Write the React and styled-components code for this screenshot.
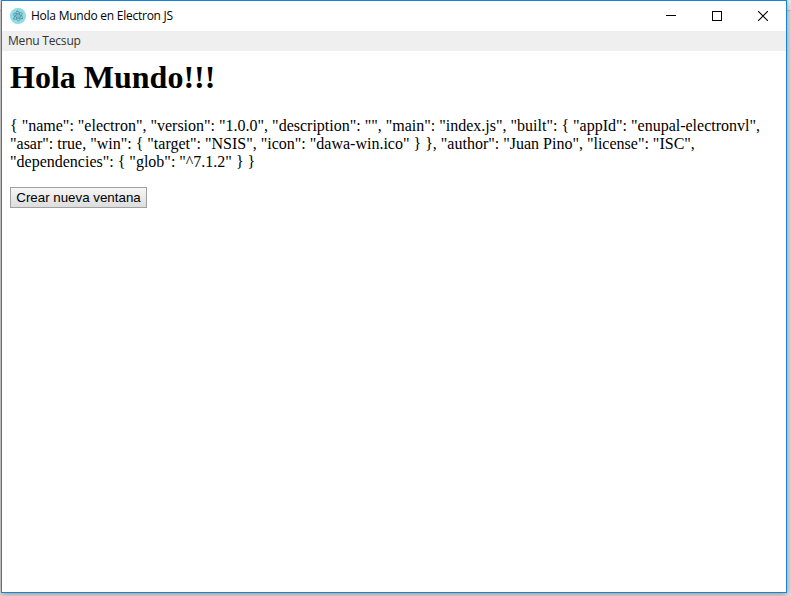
import React from "react";
import styled, { createGlobalStyle } from "styled-components";

const GlobalStyle = createGlobalStyle`
  * { box-sizing: border-box; }
  html, body { margin: 0; overflow: hidden; background: #d0d0d0; }
`;

const Desktop = styled.div`
  width: 791px;
  height: 596px;
  padding-left: 1px;
  background: linear-gradient(to bottom, #ededed 0 10px, #c3c3c3 10px 11px, #e2e2e2 11px);
`;

const AppWindow = styled.main`
  display: flex;
  flex-direction: column;
  width: 786px;
  height: 593px;
  background: #fff;
  border: 1px solid #1883d7;
  box-shadow: 0 1px 7px rgba(0, 0, 0, 0.4);
`;

const TitleBar = styled.header`
  display: flex;
  align-items: center;
  height: 30px;
  flex: none;
  padding-left: 8px;
`;

const Title = styled.div`
  flex: 1;
  margin-left: 5px;
  font: 12px/16px "Open Sans", sans-serif;
  letter-spacing: ${(p) => p.$tracking};
  color: #000;
  white-space: nowrap;
`;

const Controls = styled.div`
  display: flex;
  height: 100%;
`;

const Control = styled.button`
  display: grid;
  place-items: center;
  width: ${(p) => p.$width || 46}px;
  height: 29px;
  padding: 0;
  border: 0;
  background: transparent;
`;

const MenuBar = styled.nav`
  display: flex;
  align-items: center;
  height: 20px;
  flex: none;
  padding-left: 6px;
  background: #efefef;
`;

const MenuItem = styled.span`
  font: 12px/18px "Open Sans", sans-serif;
  letter-spacing: -0.2px;
  color: #333;
`;

const Page = styled.section`
  flex: 1;
  padding: 8px;
  font-family: "Liberation Serif", serif;
  color: #000;
`;

const Heading = styled.h1`
  margin: 0;
  font-size: 32px;
  line-height: 37px;
`;

const Json = styled.p`
  margin: 21px 0 16px;
  font-size: 16px;
  line-height: 18px;
`;

const PushButton = styled.button`
  display: block;
  width: 137px;
  height: 21px;
  padding: 0;
  border: 1px solid #a0a0a0;
  border-radius: 0;
  background: linear-gradient(#f6f6f6, #dddddd);
  font: 13.333px/17px "Liberation Sans", sans-serif;
  color: #000;
  white-space: nowrap;
`;

const packageText =
  '{ "name": "electron", "version": "1.0.0", "description": "", "main": "index.js", "built": { "appId": "enupal-electronvl", "asar": true, "win": { "target": "NSIS", "icon": "dawa-win.ico" } }, "author": "Juan Pino", "license": "ISC", "dependencies": { "glob": "^7.1.2" } }';

function ElectronIcon() {
  return (
    <svg width="16" height="16" viewBox="0 0 16 16">
      <circle cx="8" cy="8" r="8" fill="#9feaf9" />
      <circle cx="8" cy="8" r="7.9" fill="#93dce6" />
      <g fill="none" stroke="#4d8a95" strokeWidth="0.65">
        <ellipse cx="8" cy="8" rx="5" ry="2" transform="rotate(25 8 8)" />
        <ellipse cx="8" cy="8" rx="5" ry="2" transform="rotate(85 8 8)" />
        <ellipse cx="8" cy="8" rx="5" ry="2" transform="rotate(145 8 8)" />
      </g>
      <g fill="#4d8a95">
        <circle cx="8" cy="8" r="0.7" />
        <circle cx="3.7" cy="10.6" r="0.7" />
        <circle cx="12.3" cy="10.6" r="0.7" />
        <circle cx="7" cy="3.4" r="0.6" />
      </g>
    </svg>
  );
}

export default function App() {
  return (
    <>
      <GlobalStyle />
      <Desktop>
        <AppWindow>
          <TitleBar>
            <ElectronIcon />
            <Title $tracking="-0.25px">Hola Mundo en Electron JS</Title>
            <Controls>
              <Control $width={45} aria-label="Minimizar">
                <svg width="11" height="11" shapeRendering="crispEdges">
                  <path d="M0 5h10v1H0z" fill="#000" />
                </svg>
              </Control>
              <Control $width={46} aria-label="Maximizar">
                <svg width="10" height="10" shapeRendering="crispEdges">
                  <path d="M.5 .5h9v9h-9z" fill="none" stroke="#000" />
                </svg>
              </Control>
              <Control $width={46} aria-label="Cerrar">
                <svg width="10" height="10">
                  <path d="M0 0L10 10M10 0L0 10" stroke="#000" strokeWidth="1.1" />
                </svg>
              </Control>
            </Controls>
          </TitleBar>
          <MenuBar>
            <MenuItem>Menu Tecsup</MenuItem>
          </MenuBar>
          <Page>
            <Heading>Hola Mundo!!!</Heading>
            <Json>{packageText}</Json>
            <PushButton>Crear nueva ventana</PushButton>
          </Page>
        </AppWindow>
      </Desktop>
    </>
  );
}
